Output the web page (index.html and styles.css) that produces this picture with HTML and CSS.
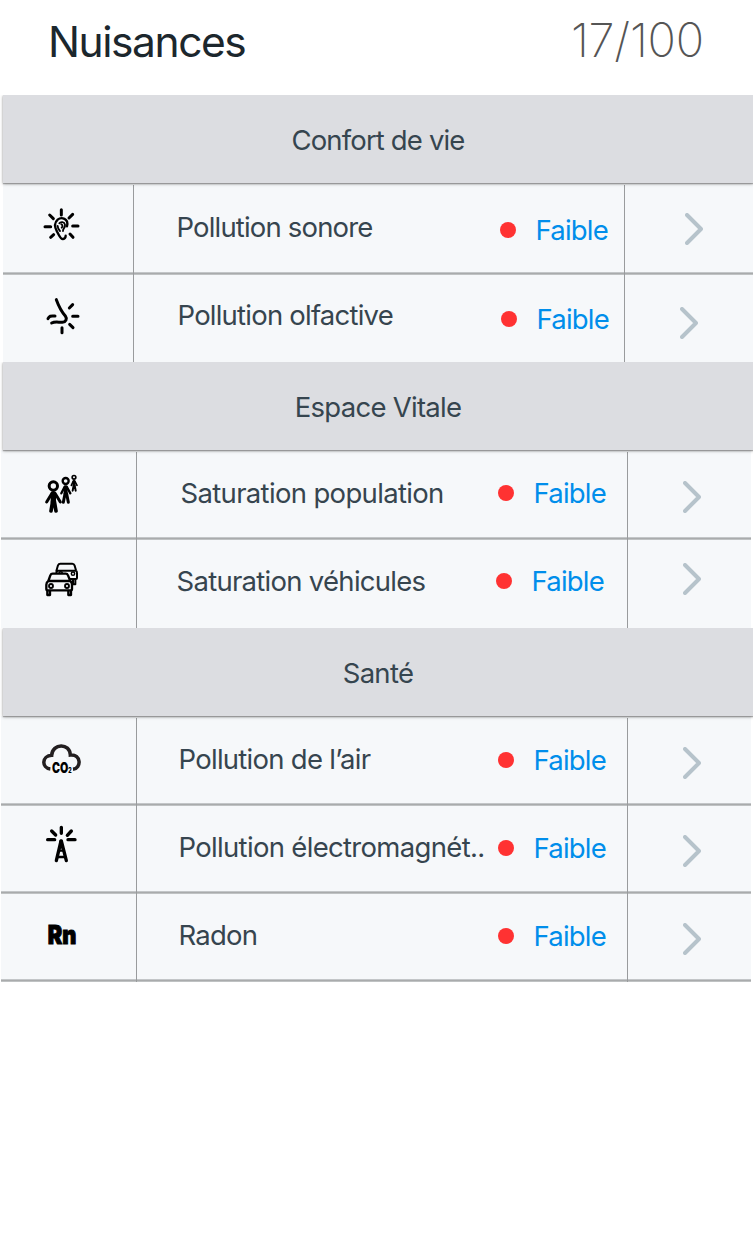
FILE: index.html
```html
<!DOCTYPE html>
<html lang="fr">
<head>
<meta charset="utf-8">
<title>Nuisances</title>
<link rel="stylesheet" href="styles.css">
</head>
<body>
<svg class="defs" width="0" height="0">
  <symbol id="chevron" viewBox="0 0 18 32"><path d="M2 2 16 16 2 30" fill="none" stroke="#b6c3cb" stroke-width="4" stroke-linecap="round" stroke-linejoin="round"/></symbol>
</svg>
<header class="top">
  <h1 class="title">Nuisances</h1>
  <div class="score">17/100</div>
</header>

<section class="section section--comfort">
  <h2 class="heading"><span class="t-comfort">Confort de vie</span></h2>
  <div class="rows">
    <div class="row row--noise">
      <div class="cell cell--icon"><svg class="icon" viewBox="0 0 192 192">
        <g class="stroke"><path d="M94 44V60M59 60 70 71M128 58 117 69M45 95H62M128 93H144M62 127 71 119M120 117 129 127" stroke-width="9"/>
        <path d="M111 94C117 70 94 65 83 74C72 84 75 99 81 110C88 121 91 133 99 132C105 131 107 127 107 122" stroke-width="7"/>
        <path d="M88 85C92 79 103 80 105 89C107 98 98 101 99 108M94 88C99 91 98 95 95 98M83 93C83 100 88 106 90 108" stroke-width="5.500"/></g>
      </svg></div>
      <div class="cell cell--main"><span class="label t-noise">Pollution sonore</span><span class="status"><i class="dot"></i><span>Faible</span></span></div>
      <div class="cell cell--go"><svg class="chevron"><use href="#chevron"/></svg></div>
    </div>
    <div class="row row--smell">
      <div class="cell cell--icon"><svg class="icon" viewBox="0 0 192 192">
        <g class="stroke"><path d="M79 44C87 66 95 80 106 93C112 101 108 111 97 112C84 112 75 109 65 114M54 101C59 91 64 93 75 93" stroke-width="9"/>
        <path d="M128 59 118 69M128 94H144M119 118 129 128M96 128V143" stroke-width="9"/></g>
      </svg></div>
      <div class="cell cell--main"><span class="label t-smell">Pollution olfactive</span><span class="status"><i class="dot"></i><span>Faible</span></span></div>
      <div class="cell cell--go"><svg class="chevron"><use href="#chevron"/></svg></div>
    </div>
  </div>
</section>

<section class="section">
  <h2 class="heading"><span class="t-space">Espace Vitale</span></h2>
  <div class="rows">
    <div class="row row--people">
      <div class="cell cell--icon"><svg class="icon" viewBox="0 0 192 192">
        <g class="stroke"><circle cx="70" cy="72" r="12.500" stroke-width="9"/><path d="M66 94 50 120M75 94 91 120" stroke-width="9"/><path d="M70 95V120" stroke-width="16"/><path d="M68 118 63 147M73 118 78 147" stroke-width="11"/>
        <circle cx="107" cy="57" r="9" stroke-width="7"/><path d="M104 74 94 94M110 74 121 94" stroke-width="7"/><path d="M107 76V95" stroke-width="12"/><path d="M105 95 100 121M110 95 115 121" stroke-width="9"/>
        <circle cx="132" cy="46" r="5.500" stroke-width="5"/><path d="M130 57 124 70M134 57 141 70" stroke-width="5"/><path d="M132 58V70" stroke-width="8"/><path d="M131 70 128 86M134 70 137 86" stroke-width="6"/></g>
      </svg></div>
      <div class="cell cell--main"><span class="label t-people">Saturation population</span><span class="status"><i class="dot"></i><span>Faible</span></span></div>
      <div class="cell cell--go"><svg class="chevron"><use href="#chevron"/></svg></div>
    </div>
    <div class="row row--cars">
      <div class="cell cell--icon"><svg class="icon" viewBox="0 0 192 192">
        <g class="stroke"><path d="M79 69 84 52Q86 47 91 47H127Q132 47 134 53L138 67Q141 70 141 76V90Q141 93 138 93H84Q79 93 79 88V76Q79 71 83 68H137" stroke-width="6"/><circle cx="92" cy="76" r="5" stroke-width="4.500"/><circle cx="129" cy="77" r="5" stroke-width="4.500"/><path d="M129 95V109H136V95" stroke-width="6"/></g>
        <path d="M55 99 61 80Q63 75 68 75H107Q112 75 114 80L121 99Q127 103 127 110V145H48V110Q48 103 55 99Z" fill="#f6f8fa"/>
        <g class="stroke"><path d="M55 99 61 82Q63 77 68 77H107Q112 77 114 82L121 99Q126 103 126 110V123Q126 127 122 127H53Q49 127 49 123V110Q49 103 55 99H121" stroke-width="7"/><circle cx="63" cy="114" r="6" stroke-width="5.500"/><circle cx="111" cy="114" r="6" stroke-width="5.500"/><path d="M52 129V141H60V129M115 129V141H123V129" stroke-width="7"/></g>
      </svg></div>
      <div class="cell cell--main"><span class="label t-cars">Saturation véhicules</span><span class="status"><i class="dot"></i><span>Faible</span></span></div>
      <div class="cell cell--go"><svg class="chevron"><use href="#chevron"/></svg></div>
    </div>
  </div>
</section>

<section class="section">
  <h2 class="heading"><span class="t-health">Santé</span></h2>
  <div class="rows">
    <div class="row row--air">
      <div class="cell cell--icon"><svg class="icon" viewBox="0 0 192 192">
        <path d="M61 117C34 114 35 77 65 76C67 39 120 38 121 75C154 72 155 115 129 118" fill="none" stroke="#231f20" stroke-width="10.500" stroke-linecap="butt"/>
        <text class="glyph" x="66" y="130" font-size="43" textLength="59" lengthAdjust="spacingAndGlyphs">CO<tspan font-size="21">2</tspan></text>
      </svg></div>
      <div class="cell cell--main"><span class="label t-air">Pollution de l’air</span><span class="status"><i class="dot"></i><span>Faible</span></span></div>
      <div class="cell cell--go"><svg class="chevron"><use href="#chevron"/></svg></div>
    </div>
    <div class="row row--waves">
      <div class="cell cell--icon"><svg class="icon" viewBox="0 0 192 192">
        <g class="stroke"><path d="M94 37V55M65 48 77 60M124 48 112 61M53 74H74M114 74H135" stroke-width="10"/><path d="M79 137 93 78H94L109 137" stroke-width="10"/><path d="M88 107H100M84 126H104" stroke-width="7"/><path d="M93 80V96" stroke-width="11"/></g>
      </svg></div>
      <div class="cell cell--main"><span class="label t-waves">Pollution électromagnét..</span><span class="status"><i class="dot"></i><span>Faible</span></span></div>
      <div class="cell cell--go"><svg class="chevron"><use href="#chevron"/></svg></div>
    </div>
    <div class="row row--radon">
      <div class="cell cell--icon"><svg class="icon" viewBox="0 0 192 192">
        <text class="glyph glyph--heavy" x="53" y="131" font-size="77" textLength="86" lengthAdjust="spacingAndGlyphs">Rn</text>
      </svg></div>
      <div class="cell cell--main"><span class="label t-radon">Radon</span><span class="status"><i class="dot"></i><span>Faible</span></span></div>
      <div class="cell cell--go"><svg class="chevron"><use href="#chevron"/></svg></div>
    </div>
  </div>
</section>
</body>
</html>
```
FILE: styles.css
```css
* { box-sizing: border-box; }
body {
  margin: 0;
  background: #fff;
  font-family: Inter, Roboto, sans-serif;
  color: #36454f;
  overflow-x: hidden;
}
.defs { display: block; }
.top {
  height: 95px;
  display: flex;
  justify-content: space-between;
  padding: 0 49px 0 48px;
}
.title {
  margin: 17px 0 0;
  font-size: 42.500px;
  font-weight: 400;
  line-height: 50px;
  letter-spacing: -1.45px;
  color: #1c272d;
}
.score {
  margin-top: 15px;
  font-size: 47px;
  font-weight: 200;
  line-height: 50px;
  letter-spacing: -0.2px;
  color: #555;
}
.section { padding-left: 1px; width: 753px; }
.section--comfort { padding-left: 3px; }
.heading {
  position: relative;
  z-index: 1;
  height: 88px;
  margin: 0 0 0 2px;
  padding-top: 28px;
  background: #dcdde1;
  box-shadow: 0 1px 1px rgba(90, 90, 90, .4), 0 1px 3px rgba(0, 0, 0, .35);
  clip-path: inset(0 0 -8px -5px);
  text-align: center;
  font-size: 27.500px;
  font-weight: 400;
  line-height: 34px;
}
.section--comfort .heading { margin-left: 0; }
.rows { width: 750px; }
.row {
  --label-x: 42px;
  --label-y: 24px;
  --status-x: 361px;
  --status-y: 25px;
  --go-x: 55px;
  --go-y: 29px;
  --icon-y: 10px;
  display: grid;
  grid-template-columns: 135px 492px 123px;
  height: 88px;
  background:
    linear-gradient(#c3c6c8 0 1px, #a9abac 1px 2px, #bfc2c3 2px 3px) bottom / 100% 3px no-repeat,
    #f6f8fa;
}
.section--comfort .row { grid-template-columns: 130px 492px 128px; --icon-x: 27px; }
.cell--icon { padding: var(--icon-y) 0 0 var(--icon-x, 29px); }
.cell--main {
  display: grid;
  grid-template-columns: var(--status-x) 1fr;
  border: solid #999b9d;
  border-width: 0 1px;
  font-size: 27.500px;
  line-height: 34px;
  white-space: nowrap;
}
.row:first-child .cell--main { margin-top: 2px; }
.label { padding: var(--label-y) 0 0 var(--label-x); }
.status {
  display: flex;
  align-items: center;
  gap: 19.500px;
  align-self: start;
  margin-top: var(--status-y);
  letter-spacing: -0.8px;
  color: #008eeb;
}
.dot { width: 16px; height: 16px; border-radius: 50%; background: #ff3232; }
.cell--go { padding: var(--go-y) 0 0 var(--go-x); }
.chevron { display: block; width: 18px; height: 32px; }
.icon { display: block; width: 64px; height: 64px; }
.stroke { fill: none; stroke: #000; stroke-linecap: round; stroke-linejoin: round; }
.glyph { font-family: Inter, sans-serif; font-weight: 900; fill: #000; }
.glyph--heavy { stroke: #000; stroke-width: 3px; }

.t-comfort { letter-spacing: -0.85px; }
.t-space { letter-spacing: -0.72px; }
.t-health { letter-spacing: -0.7px; }
.t-noise { letter-spacing: -0.83px; }
.t-smell { letter-spacing: -0.78px; }
.t-people { letter-spacing: -0.67px; }
.t-cars { letter-spacing: -0.72px; }
.t-air { letter-spacing: -0.73px; }
.t-waves { letter-spacing: -0.68px; }
.t-radon { letter-spacing: -0.8px; }

.row--noise { height: 92px; --label-x: 42.500px; --label-y: 25px; --status-x: 366px; --status-y: 28px; --go-x: 60px; --go-y: 30px; --icon-y: 12px; }
.row--smell { height: 87px; background: #f6f8fa; --label-x: 43.500px; --label-y: 23px; --status-x: 367px; --status-y: 27px; --go-y: 32px; }
.row--people { height: 90px; --label-x: 43.500px; --label-y: 24px; --status-y: 24px; --go-y: 31px; --icon-y: 12px; }
.row--cars { background: #f6f8fa; --label-x: 39.500px; --status-x: 359px; --status-y: 24px; --go-y: 23px; --icon-y: 8px; }
.row--air { height: 90px; --label-x: 41.500px; --label-y: 24px; --status-y: 25px; --go-y: 31px; --icon-y: 14px; }
.row--waves { --label-x: 41.500px; --icon-y: 9px; }
.row--radon { --label-x: 41.500px; --icon-y: 6px; }
```
